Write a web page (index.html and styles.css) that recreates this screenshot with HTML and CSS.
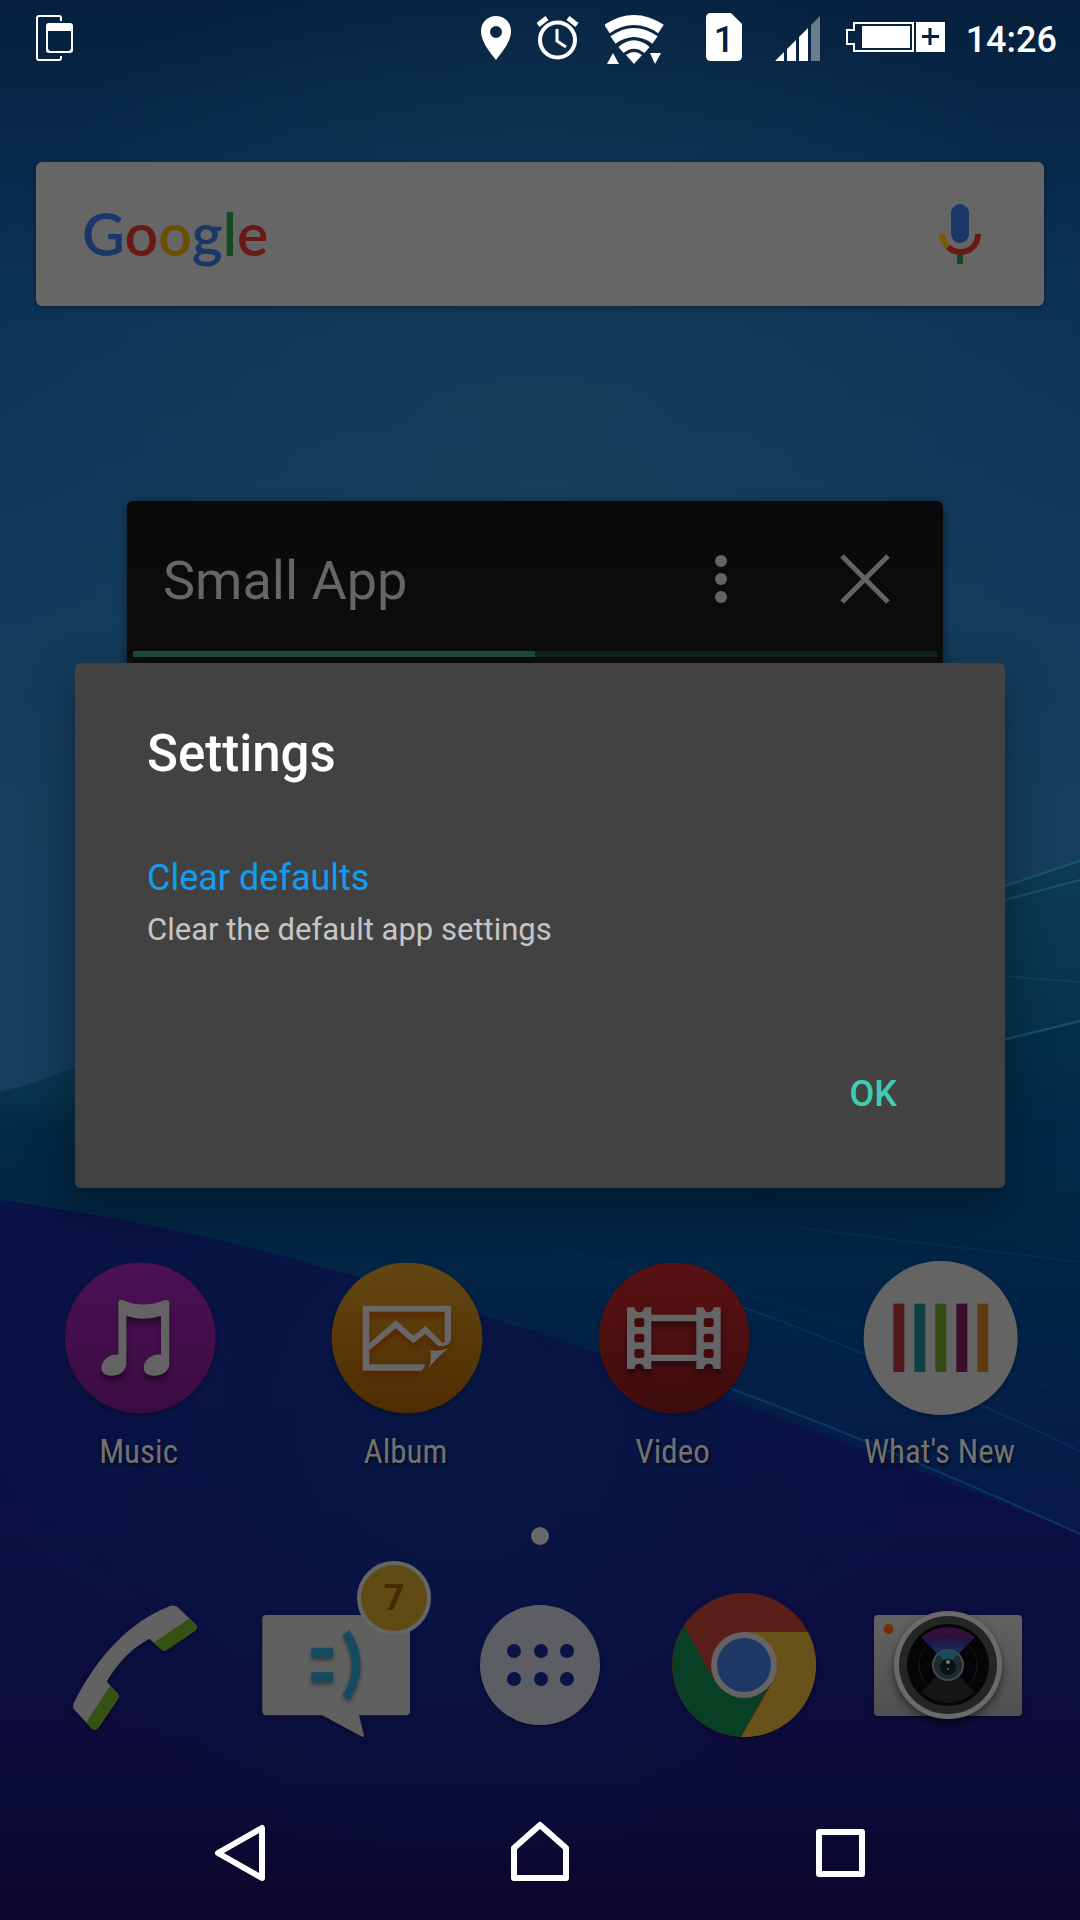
FILE: index.html
```html
<!DOCTYPE html>
<html lang="en">
<head>
<meta charset="utf-8">
<meta name="viewport" content="width=device-width, initial-scale=1">
<title>Home</title>
<link rel="stylesheet" href="styles.css">
</head>
<body>
<div class="screen">
  <svg class="wallpaper" viewBox="0 0 1080 1920" preserveAspectRatio="none" aria-hidden="true">
    <defs>
      <linearGradient id="sky" x1="0" y1="0" x2="0" y2="1">
        <stop offset="0" stop-color="#04203d"/><stop offset=".06" stop-color="#082748"/><stop offset=".15" stop-color="#0c3058"/>
        <stop offset=".3" stop-color="#12395e"/><stop offset=".42" stop-color="#153f5d"/><stop offset="1" stop-color="#153f5d"/>
      </linearGradient>
      <radialGradient id="glow" gradientUnits="userSpaceOnUse" cx="540" cy="520" r="620">
        <stop offset="0" stop-color="#17405a" stop-opacity=".9"/><stop offset=".5" stop-color="#163f59" stop-opacity=".5"/><stop offset="1" stop-color="#163f58" stop-opacity="0"/>
      </radialGradient>
      <linearGradient id="sea" gradientUnits="userSpaceOnUse" x1="0" y1="860" x2="0" y2="1500">
        <stop offset="0" stop-color="#0b3c52"/><stop offset=".3" stop-color="#06334b"/><stop offset=".4" stop-color="#032b48"/>
        <stop offset=".55" stop-color="#022644"/><stop offset=".8" stop-color="#032148"/><stop offset="1" stop-color="#071a49"/>
      </linearGradient>
      <linearGradient id="shore" gradientUnits="userSpaceOnUse" x1="0" y1="1060" x2="0" y2="1186">
        <stop offset="0" stop-color="#0c3a55"/><stop offset=".3" stop-color="#08334c"/><stop offset=".55" stop-color="#022a45"/><stop offset="1" stop-color="#022644" stop-opacity="0"/>
      </linearGradient>
      <linearGradient id="deep" gradientUnits="userSpaceOnUse" x1="0" y1="1200" x2="0" y2="1920">
        <stop offset="0" stop-color="#0a1246"/><stop offset=".4" stop-color="#0b1044"/><stop offset=".7" stop-color="#0d0c3e"/>
        <stop offset=".86" stop-color="#0b0b36"/><stop offset="1" stop-color="#0c0529"/>
      </linearGradient>
      <radialGradient id="core" gradientUnits="userSpaceOnUse" cx="460" cy="1420" r="460">
        <stop offset="0" stop-color="#081744"/><stop offset="1" stop-color="#081744" stop-opacity="0"/>
      </radialGradient>
    </defs>
    <rect width="1080" height="1920" fill="url(#sky)"/>
    <rect width="1080" height="1150" fill="url(#glow)"/>
    <path d="M0 1092Q45 1082 90 1060L1005 887L1080 861V1920H0Z" fill="url(#sea)"/>
    <path d="M0 1092Q45 1082 90 1060H300V1186H0Z" fill="url(#shore)"/>
    <path d="M1005 1039L1080 1021V1260L700 1180Z" fill="#022b48" opacity=".4"/>
    <path d="M0 1200Q180 1225 340 1272Q620 1350 1080 1534V1920H0Z" fill="url(#deep)"/>
    <path d="M0 1200Q180 1225 340 1272Q620 1350 1080 1534V1920H0Z" fill="url(#core)"/>
    <g fill="none" stroke="#1b5c70" stroke-width="2">
      <path d="M990 891L1080 861M990 904L1080 880M990 1043L1080 1021" opacity=".8"/>
      <path d="M990 975L1080 982" opacity=".35"/><path d="M800 1228L1080 1262" opacity=".15"/>
    </g>
    <g fill="none" stroke="#0c3c6c" stroke-width="2">
      <path d="M724 1386Q900 1452 1080 1534" opacity=".8"/><path d="M740 1306Q900 1364 1080 1451" opacity=".5"/>
      <path d="M540 1246Q800 1300 1080 1397" opacity=".2"/>
    </g>
  </svg>

  <header class="status-bar">
    <svg width="37" height="72" viewBox="36 1 37 72" aria-hidden="true">
      <path d="M61 22V19Q61 17 59 17H39Q37 17 37 19V59Q37 61 39 61H59Q61 61 61 59V57" fill="none" stroke="#fff" stroke-width="2"/>
      <path d="M49 24H70Q73 24 73 27V51Q73 54 70 54H49Q46 54 46 51V27Q46 24 49 24ZM48 32V50L50 52H69L71 50V32Z" fill="#fff" fill-rule="evenodd"/>
    </svg>
    <div class="status-icons">
      <svg width="36" height="72" viewBox="481 0 36 72" aria-hidden="true">
        <path fill="#fff" fill-rule="evenodd" d="M496 16C487 16 481 23 481 31C481 42 490 52 496 60C502 52 511 42 511 31C511 23 505 16 496 16ZM496 26A6 6 0 1 1 496 38A6 6 0 1 1 496 26Z"/>
      </svg>
      <svg width="48" height="72" viewBox="537 0 48 72" aria-hidden="true" fill="none" stroke="#fff">
        <circle cx="557.500" cy="40" r="17.500" stroke-width="4"/>
        <path d="M538 25L547 18M577 25L568 18" stroke-width="5"/><path d="M557 29V41L566 47" stroke-width="3"/>
      </svg>
      <svg width="81" height="72" viewBox="605 0 81 72" aria-hidden="true" fill="none" stroke="#fff">
        <path d="M607 29Q634 11 661 29" stroke-width="10"/><path d="M613 40Q634 25 655 40" stroke-width="9"/>
        <path d="M621 50Q634 39 647 50" stroke-width="8"/>
        <path d="M626 55Q634 49 642 55L634 64ZM607 64L613 53L619 64ZM650 53H661L655 64Z" fill="#fff" stroke="none"/>
      </svg>
      <svg width="49" height="72" viewBox="706 0 49 72" role="img" aria-label="SIM 1">
        <path d="M711 13H731L742 24V56Q742 61 737 61H711Q706 61 706 56V18Q706 13 711 13Z" fill="#fff"/>
        <text class="sim-number" x="724" y="52" text-anchor="middle">1</text>
      </svg>
      <svg width="51" height="72" viewBox="775 0 51 72" aria-hidden="true" fill="#fff">
        <path d="M775 61L784 52V61ZM787 49L796 40V61H787ZM799 37L808 28V61H799Z"/><path d="M811 25L820 16V61H811Z" opacity=".4"/>
      </svg>
      <svg width="100" height="72" viewBox="846 0 100 72" aria-hidden="true">
        <path d="M854 23H913V51H854V44H847V30H854Z" fill="none" stroke="#fff" stroke-width="2"/>
        <path d="M862 26H910V48H862ZM916 22H945V52H916Z" fill="#fff"/><path d="M930 28V45M922 36.500H939" stroke="#04203d" stroke-width="3"/>
      </svg>
      <time class="clock">14:26</time>
    </div>
  </header>

  <main class="home">
    <div class="search-bar">
      <a class="google" href="#" aria-label="Google"><span class="g-blue">G</span><span class="g-red">o</span><span class="g-yellow">o</span><span class="g-blue">g</span><span class="g-green">l</span><span class="g-red">e</span></a>
      <button class="icon-button" aria-label="Voice search">
        <svg width="44" height="72" viewBox="938 198 44 72" aria-hidden="true" fill="none" stroke-width="6">
          <rect x="951" y="204" width="18" height="39" rx="9" fill="#1b3768"/>
          <path d="M942 234Q942 241 948 247" stroke="#7a5a00"/><path d="M948 247Q953 252 960 252Q968 252 973 247Q978 242 978 234" stroke="#671a15"/>
          <path d="M960 255V264" stroke="#154a25"/>
        </svg>
      </button>
    </div>

    <nav class="apps" aria-label="Apps">
      <a class="app" href="#">
        <svg viewBox="88 85 480 480" aria-hidden="true">
          <defs><linearGradient id="mu" x1="0" y1="0" x2="0" y2="1"><stop stop-color="#4c1056"/><stop offset="1" stop-color="#3a0c41"/></linearGradient></defs>
          <circle cx="329" cy="325" r="226" fill="url(#mu)"/>
          <g class="raised" fill="#636363">
            <path d="M263 218Q265 208 276 211Q338 238 402 211Q414 209 416 219V405C413 428 390 439 369 438C348 438 339 425 339 414C339 392 363 372 391 375V258Q338 276 287 258V405C284 428 261 439 241 438C221 438 212 426 212 414C213 392 237 372 263 375Z"/>
          </g>
        </svg>
        <span>Music</span>
      </a>
      <a class="app" href="#">
        <svg viewBox="890 85 480 480" aria-hidden="true">
          <defs><linearGradient id="al" x1="0" y1="0" x2="0" y2="1"><stop stop-color="#634712"/><stop offset="1" stop-color="#4e2d00"/></linearGradient></defs>
          <circle cx="1130" cy="325" r="226" fill="url(#al)"/>
          <g class="raised warm">
            <path d="M1184 404Q1182 418 1172 423H997V228H1262V330Q1260 345 1238 349H1223L1185 312L1149 341L1096 296L1017 362V404ZM1017 341L1096 272L1149 318L1185 289L1238 341L1243 335V246H1017Z" fill="#676767" fill-rule="evenodd"/>
            <path d="M1200 362Q1230 366 1255 355Q1215 387 1196 416Q1204 390 1200 362Z" fill="#676767"/>
          </g>
        </svg>
        <span>Album</span>
      </a>
      <a class="app" href="#">
        <svg viewBox="101 85 480 480" aria-hidden="true">
          <defs><linearGradient id="vi" x1="0" y1="0" x2="0" y2="1"><stop stop-color="#591213"/><stop offset="1" stop-color="#3f0c0c"/></linearGradient></defs>
          <circle cx="341" cy="325" r="226" fill="url(#vi)"/>
          <g class="raised">
            <path d="M200 233H222Q224 248 237 248Q250 248 252 233H273V255H408V233H430Q432 248 445 248Q458 248 460 233H481V418H460Q458 402 445 402Q432 402 430 418H408V394H273V418H252Q250 402 237 402Q224 402 222 418H200ZM273 275V375H408V275Z" fill="#656565" fill-rule="evenodd"/>
          </g>
          <g fill="#430a0a">
            <rect x="222" y="265" width="30" height="27" rx="8"/><rect x="222" y="312" width="30" height="26" rx="8"/><rect x="222" y="358" width="30" height="27" rx="8"/>
            <rect x="430" y="265" width="30" height="27" rx="8"/><rect x="430" y="312" width="30" height="26" rx="8"/><rect x="430" y="358" width="30" height="27" rx="8"/>
          </g>
        </svg>
        <span>Video</span>
      </a>
      <a class="app" href="#">
        <svg viewBox="902 85 480 480" aria-hidden="true">
          <circle cx="1141" cy="325" r="231" fill="#646464"/>
          <path d="M999 222H1032V427H999Z" fill="#521a1d"/><path d="M1062 222H1095V427H1062Z" fill="#0d4143"/>
          <path d="M1125 222H1158V427H1125Z" fill="#354a15"/><path d="M1188 222H1221V427H1188Z" fill="#3c0e2b"/><path d="M1251 222H1284V427H1251Z" fill="#5e3c0f"/>
        </svg>
        <span>What's New</span>
      </a>
    </nav>

    <div class="page-dot"></div>

    <nav class="dock" aria-label="Dock">
      <a class="dock-item" href="#" aria-label="Phone">
        <svg viewBox="36 135 480 480" aria-hidden="true">
          <defs><clipPath id="handset"><path d="M385 200Q402 192 413 202L466 252Q475 262 467 271L383 328Q372 336 363 328L328 296Q250 338 200 425L232 459Q240 468 234 476L176 562Q168 574 156 566L102 508Q97 500 101 490C170 350 270 245 385 200Z"/></clipPath></defs>
          <g clip-path="url(#handset)"><path d="M80 180H490V590H80Z" fill="#626262"/><path d="M340 309L450 234L500 260L370 360ZM210 438L138 548L170 600L260 470Z" fill="#365213"/></g>
        </svg>
      </a>
      <a class="dock-item" href="#" aria-label="Messages, 7 new">
        <svg viewBox="648 135 480 480" aria-hidden="true">
          <path d="M679 225H1098Q1110 225 1110 237V514Q1110 526 1098 526H957L972 587Q972 592 966 590L847 526H679Q667 526 667 514V237Q667 225 679 225Z" fill="#606060"/>
          <g class="raised soft"><path d="M814 323H879V353H814ZM814 397H879V427H814ZM908 285L928 271Q996 375 928 480L908 465Q962 375 908 285Z" fill="#164a60"/></g>
        </svg>
        <span class="badge">7</span>
      </a>
      <a class="dock-item" href="#" aria-label="All apps">
        <svg viewBox="460 1585 160 160" aria-hidden="true">
          <circle cx="540" cy="1665" r="60" fill="#5d5e63"/>
          <g fill="#0b1246"><circle cx="514" cy="1651" r="7"/><circle cx="541" cy="1651" r="7"/><circle cx="567" cy="1651" r="7"/><circle cx="514" cy="1679" r="7"/><circle cx="541" cy="1679" r="7"/><circle cx="567" cy="1679" r="7"/></g>
        </svg>
      </a>
      <a class="dock-item" href="#" aria-label="Chrome">
        <svg viewBox="664 1585 160 160" aria-hidden="true">
          <circle cx="744" cy="1665" r="72" fill="#5a1f19"/>
          <path d="M684 1626L714 1680L770 1684L741 1737A72 72 0 0 1 684 1626Z" fill="#074024"/>
          <path d="M744 1632H808A72 72 0 0 1 741 1737L772 1683Z" fill="#69511a"/>
          <circle cx="744" cy="1665" r="33" fill="#646464"/><circle cx="744" cy="1665" r="27" fill="#1d3865"/>
        </svg>
      </a>
      <a class="dock-item" href="#" aria-label="Camera">
        <svg viewBox="868 1585 160 160" aria-hidden="true">
          <defs>
            <linearGradient id="body" x1="0" y1="0" x2="0" y2="1"><stop stop-color="#626262"/><stop offset="1" stop-color="#505050"/></linearGradient>
            <linearGradient id="flare" x1="0" y1="0" x2="0" y2="1"><stop offset=".2" stop-color="#330f40"/><stop offset=".5" stop-color="#1a1f4c"/><stop offset="1" stop-color="#1a4e66"/></linearGradient>
          </defs>
          <rect x="874" y="1615" width="148" height="101" rx="4" fill="url(#body)"/><circle cx="888.500" cy="1629" r="5" fill="#702f0a"/>
          <circle class="lens" cx="948" cy="1665" r="54" fill="#6a6a6a"/><circle cx="948" cy="1665" r="49" fill="#252525"/><circle cx="948" cy="1665" r="41" fill="#050507"/>
          <path d="M948 1665L921 1637Q948 1617 975 1637Z" fill="url(#flare)"/><path d="M948 1665L921 1692Q948 1714 975 1692Z" fill="#151518"/>
          <circle cx="948" cy="1665" r="29" fill="none" stroke="#17191c"/>
          <circle cx="948" cy="1665" r="15" fill="#1b2b30" stroke="#464a4b" stroke-width="2"/><path d="M948 1665L938 1654Q948 1646 958 1654Z" fill="#1b4a5e"/>
          <circle cx="948" cy="1667" r="8" fill="#0b1213"/>
          <circle cx="948" cy="1662" r="2" fill="#777"/><circle cx="948" cy="1669" r="1" fill="#666"/>
        </svg>
      </a>
    </nav>
  </main>

  <nav class="system-nav" aria-label="System">
    <button class="icon-button" aria-label="Back"><svg viewBox="208 1821 64 64" aria-hidden="true"><path d="M262 1828V1878L218 1853Z"/></svg></button>
    <button class="icon-button" aria-label="Home"><svg viewBox="508 1821 64 64" aria-hidden="true"><path d="M540 1825L566 1848V1878H514V1848Z"/></svg></button>
    <button class="icon-button" aria-label="Recent apps"><svg viewBox="808 1821 64 64" aria-hidden="true"><path d="M819 1832H862V1874H819Z"/></svg></button>
  </nav>

  <section class="small-app" aria-label="Small App">
    <div class="small-app-bar">
      <h2>Small App</h2>
      <button class="icon-button" aria-label="More options"><svg width="60" height="60" viewBox="0 0 60 60" fill="#646464" aria-hidden="true"><circle cx="30" cy="12" r="6"/><circle cx="30" cy="30" r="6"/><circle cx="30" cy="48" r="6"/></svg></button>
      <button class="icon-button" aria-label="Close"><svg width="60" height="60" viewBox="0 0 60 60" stroke="#646464" stroke-width="5" aria-hidden="true"><path d="M7 7L53 53M53 7L7 53"/></svg></button>
    </div>
    <div class="tabs"><span class="tab-active"></span></div>
  </section>

  <div class="overlay">
    <section class="dialog" role="dialog" aria-labelledby="dialog-title">
      <h1 id="dialog-title">Settings</h1>
      <a class="setting" href="#">Clear defaults</a>
      <p class="summary">Clear the default app settings</p>
      <div class="actions"><button class="ok">OK</button></div>
    </section>
  </div>
</div>
</body>
</html>
```
FILE: styles.css
```css
* { box-sizing: border-box; }
body { margin: 0; background: #04203d; font-family: Roboto, "Noto Sans", sans-serif; }
h1, h2, p { margin: 0; }
a { color: inherit; text-decoration: none; }
svg { display: block; }
button { border: 0; background: none; font: inherit; color: inherit; }
.icon-button { padding: 0; display: grid; place-items: center; }

.screen { position: relative; min-height: 100vh; display: flex; flex-direction: column; overflow: hidden; }
.wallpaper { position: absolute; inset: 0; width: 100%; height: 100%; }

.status-bar { position: relative; display: flex; justify-content: space-between; height: 72px; padding: 0 23px 0 36px; }
.status-icons { display: flex; gap: 20px; align-items: center; }
.clock { color: #fff; font-size: 36px; font-weight: 500; line-height: 72px; padding-top: 8px; }
.sim-number { fill: #04203d; font-size: 36px; font-weight: 500; }

.home { position: relative; flex: 1; display: flex; flex-direction: column; padding-bottom: 31px; }
.search-bar {
  display: flex; align-items: center; justify-content: space-between;
  height: 144px; margin: 90px 36px auto; padding: 0 62px 0 46px;
  background: #666; border-radius: 6px; box-shadow: 0 2px 6px rgba(0, 0, 0, .35);
}
.google { font-family: Lato, sans-serif; font-size: 59px; font-weight: 600; line-height: 72px; }
.g-blue { color: #1b3768; }
.g-red { color: #671a15; }
.g-yellow { color: #6b4f00; }
.g-green { color: #154a25; }

.apps { display: grid; grid-template-columns: repeat(4, 1fr); padding: 0 6px; }
.app {
  display: flex; flex-direction: column; align-items: center; gap: 14px;
  font-family: "Roboto Condensed", "Liberation Sans Narrow", Roboto, sans-serif;
  font-size: 33px; line-height: 40px; color: #727272; text-shadow: 1px 2px 3px rgba(0, 0, 0, .7);
}
.app svg, .dock-item svg { width: 160px; height: 160px; overflow: visible; filter: drop-shadow(0 2px 2px rgba(0, 0, 0, .3)); }
.app span { padding-right: 2px; }
.raised { filter: drop-shadow(0 16px 8px rgba(20, 0, 20, .5)); }
.warm { filter: drop-shadow(0 16px 8px rgba(90, 30, 0, .7)); }
.soft { filter: drop-shadow(0 8px 6px rgba(0, 0, 0, .4)); }
.lens { filter: drop-shadow(0 4px 4px rgba(0, 0, 0, .5)); }

.page-dot { width: 18px; height: 18px; margin: 55px auto 40px; border-radius: 50%; background: #686868; }

.dock { display: grid; grid-template-columns: repeat(5, 1fr); padding: 0 30px; }
.dock-item { position: relative; display: flex; justify-content: center; }
.badge {
  position: absolute; top: -24px; right: 7px; width: 74px; height: 74px;
  border: 4px solid #666; border-radius: 50%; background: #614b14;
  color: #482800; font-size: 36px; font-weight: 700; line-height: 66px; text-align: center;
}

.system-nav { position: relative; display: grid; grid-template-columns: repeat(3, 300px); justify-content: center; height: 144px; padding-top: 10px; }
.system-nav svg { width: 64px; height: 64px; fill: none; stroke: #fff; stroke-width: 6; stroke-linejoin: round; }

.small-app {
  position: absolute; top: 501px; left: 127px; right: 137px; height: 480px; padding: 0 6px;
  background: linear-gradient(#090909, #0d0d0d 160px); border-radius: 6px; box-shadow: 0 2px 9px rgba(0, 0, 0, .5);
}
.small-app-bar { display: flex; align-items: center; gap: 84px; height: 150px; padding: 6px 42px 0 30px; }
.small-app h2 { flex: 1; padding-top: 4px; color: #666; font-size: 54px; font-weight: 400; line-height: 64px; }
.tabs { height: 6px; background: #10241f; }
.tab-active { display: block; width: 50%; height: 6px; background: #1c4d42; }

.overlay { position: absolute; inset: 72px 0 144px; display: flex; align-items: center; padding: 3px 75px 0; }
.dialog {
  flex: 1; display: flex; flex-direction: column; padding: 61px 76px 50px 72px;
  background: #424242; border-radius: 6px; box-shadow: 0 18px 48px rgba(0, 0, 0, .4);
}
.dialog h1 { color: #fff; font-size: 51px; font-weight: 500; line-height: 60px; margin-bottom: 70px; }
.setting { color: #149df0; font-size: 36px; line-height: 48px; margin-bottom: 8px; }
.summary { color: #c6c6c6; font-size: 31px; line-height: 40px; }
.actions { display: flex; justify-content: flex-end; margin-top: 100px; }
.ok { padding: 20px 32px; color: #40ccb0; font-size: 36px; font-weight: 500; line-height: 48px; }
```
